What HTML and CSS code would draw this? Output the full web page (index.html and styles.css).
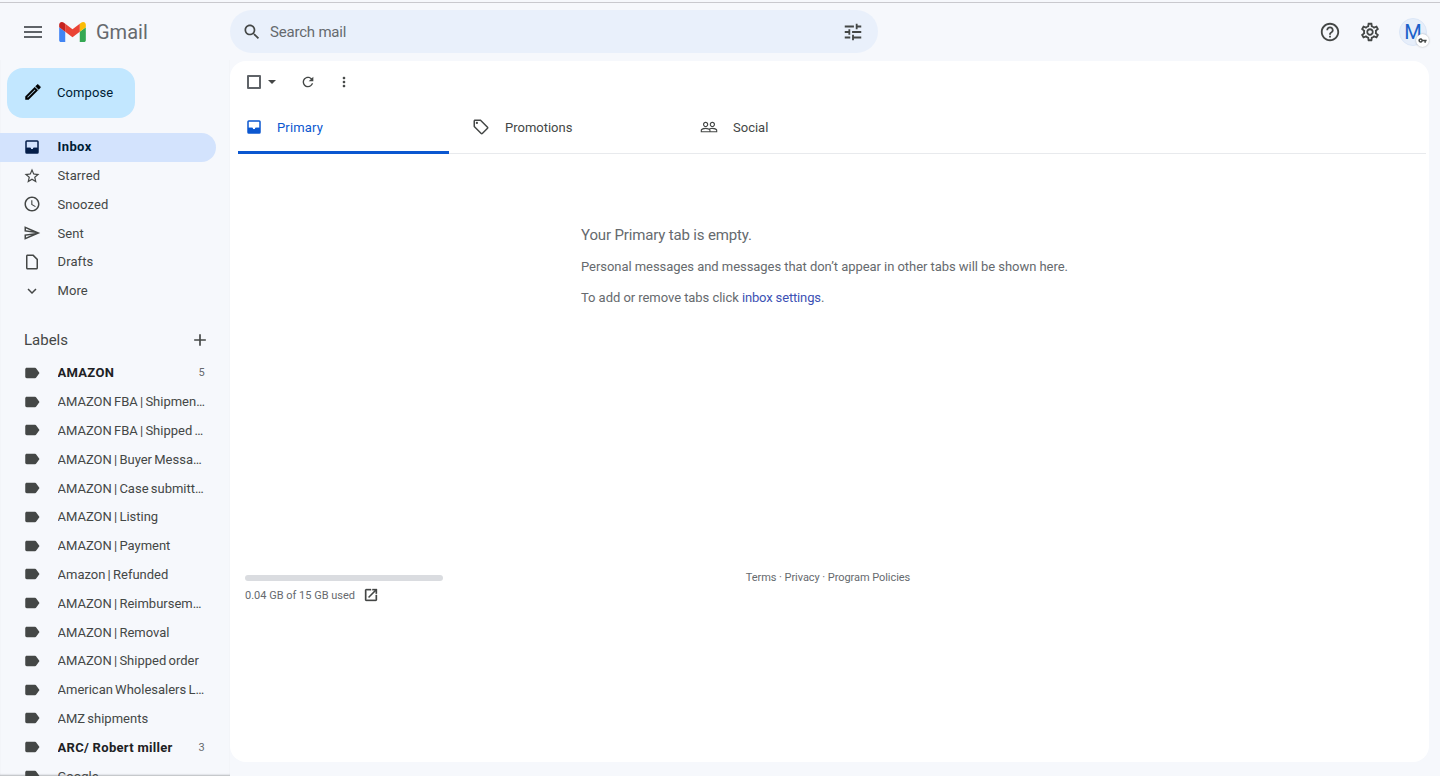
FILE: index.html
```html
<!DOCTYPE html>
<html lang="en">
<head>
    <meta charset="UTF-8">
    <meta name="viewport" content="width=device-width, initial-scale=1.0">
    <title>Inbox - Gmail</title>
    <link rel="stylesheet" href="styles.css">
</head>
<body>
    <svg class="icon-defs" aria-hidden="true">
        <symbol id="i-menu" viewBox="0 0 24 24"><path d="M3 18h18v-2H3v2zm0-5h18v-2H3v2zm0-7v2h18V6H3z"/></symbol>
        <symbol id="i-search" viewBox="0 0 24 24"><path d="M15.5 14h-.79l-.28-.27C15.41 12.59 16 11.11 16 9.5 16 5.91 13.09 3 9.5 3S3 5.91 3 9.5 5.91 16 9.5 16c1.61 0 3.09-.59 4.23-1.57l.27.28v.79l5 4.99L20.49 19l-4.99-5zm-6 0C7.01 14 5 11.99 5 9.5S7.01 5 9.5 5 14 7.01 14 9.5 11.99 14 9.5 14z"/></symbol>
        <symbol id="i-tune" viewBox="0 0 24 24"><path d="M3 17v2h6v-2H3zM3 5v2h10V5H3zm10 16v-2h8v-2h-8v-2h-2v6h2zM7 9v2H3v2h4v2h2V9H7zm14 4v-2H11v2h10zm-6-4h2V7h4V5h-4V3h-2v6z"/></symbol>
        <symbol id="i-help" viewBox="0 0 24 24"><path d="M11 18h2v-2h-2v2zm1-16C6.48 2 2 6.48 2 12s4.48 10 10 10 10-4.48 10-10S17.52 2 12 2zm0 18c-4.41 0-8-3.59-8-8s3.59-8 8-8 8 3.59 8 8-3.59 8-8 8zm0-14c-2.21 0-4 1.79-4 4h2c0-1.1.9-2 2-2s2 .9 2 2c0 2-3 1.75-3 5h2c0-2.25 3-2.5 3-5 0-2.21-1.79-4-4-4z"/></symbol>
        <symbol id="i-settings" viewBox="0 0 24 24"><path d="M19.43 12.98c.04-.32.07-.64.07-.98 0-.34-.03-.66-.07-.98l2.11-1.65c.19-.15.24-.42.12-.64l-2-3.46c-.09-.16-.26-.25-.44-.25-.06 0-.12.01-.17.03l-2.49 1c-.52-.4-1.08-.73-1.69-.98l-.38-2.65C14.46 2.18 14.25 2 14 2h-4c-.25 0-.46.18-.49.42l-.38 2.65c-.61.25-1.17.59-1.69.98l-2.49-1c-.06-.02-.12-.03-.18-.03-.17 0-.34.09-.43.25l-2 3.46c-.13.22-.07.49.12.64l2.11 1.65c-.04.32-.07.65-.07.98 0 .33.03.66.07.98l-2.11 1.65c-.19.15-.24.42-.12.64l2 3.46c.09.16.26.25.44.25.06 0 .12-.01.17-.03l2.49-1c.52.4 1.08.73 1.69.98l.38 2.65c.03.24.24.42.49.42h4c.25 0 .46-.18.49-.42l.38-2.65c.61-.25 1.17-.59 1.69-.98l2.49 1c.06.02.12.03.18.03.17 0 .34-.09.43-.25l2-3.46c.12-.22.07-.49-.12-.64l-2.11-1.65zm-1.98-1.71c.04.31.05.52.05.73 0 .21-.02.43-.05.73l-.14 1.13.89.7 1.08.84-.7 1.21-1.27-.51-1.04-.42-.9.68c-.43.32-.84.56-1.25.73l-1.06.43-.16 1.13-.2 1.35h-1.4l-.19-1.35-.16-1.13-1.06-.43c-.43-.18-.83-.41-1.23-.71l-.91-.7-1.06.43-1.27.51-.7-1.21 1.08-.84.89-.7-.14-1.13c-.03-.31-.05-.54-.05-.74s.02-.43.05-.73l.14-1.13-.89-.7-1.08-.84.7-1.21 1.27.51 1.04.42.9-.68c.43-.32.84-.56 1.25-.73l1.06-.43.16-1.13.2-1.35h1.39l.19 1.35.16 1.13 1.06.43c.43.18.83.41 1.23.71l.91.7 1.06-.43 1.27-.51.7 1.21-1.07.85-.89.7.14 1.13zM12 8c-2.21 0-4 1.79-4 4s1.79 4 4 4 4-1.79 4-4-1.79-4-4-4zm0 6c-1.1 0-2-.9-2-2s.9-2 2-2 2 .9 2 2-.9 2-2 2z"/></symbol>
        <symbol id="i-edit" viewBox="0 0 24 24"><path d="M3 17.25V21h3.75L17.81 9.94l-3.75-3.75L3 17.25zM5.92 19H5v-.92l9.06-9.06.92.92L5.92 19zM20.71 7.04c.39-.39.39-1.02 0-1.41l-2.34-2.34c-.2-.2-.45-.29-.71-.29s-.51.1-.7.29l-1.83 1.83 3.75 3.75 1.83-1.83z"/></symbol>
        <symbol id="i-star" viewBox="0 0 24 24"><path d="M22 9.24l-7.19-.62L12 2 9.19 8.63 2 9.24l5.46 4.73L5.82 21 12 17.27 18.18 21l-1.63-7.03L22 9.24zM12 15.4l-3.76 2.27 1-4.28-3.32-2.88 4.38-.38L12 6.1l1.71 4.04 4.38.38-3.32 2.88 1 4.28L12 15.4z"/></symbol>
        <symbol id="i-clock" viewBox="0 0 24 24"><path d="M11.99 2C6.47 2 2 6.48 2 12s4.47 10 9.99 10C17.52 22 22 17.52 22 12S17.52 2 11.99 2zM12 20c-4.42 0-8-3.58-8-8s3.58-8 8-8 8 3.58 8 8-3.58 8-8 8zm.5-13H11v6l5.25 3.15.75-1.23-4.5-2.67z"/></symbol>
        <symbol id="i-send" viewBox="0 0 24 24"><path d="M4.01 6.03l7.51 3.22-7.52-1 .01-2.22m7.5 8.72L4 17.97v-2.22l7.51-1M2.01 3L2 10l15 2-15 2 .01 7L23 12 2.01 3z"/></symbol>
        <symbol id="i-draft" viewBox="0 0 24 24"><path d="M14 2H6c-1.1 0-1.99.9-1.99 2L4 20c0 1.1.89 2 1.99 2H18c1.1 0 2-.9 2-2V8l-6-6zM6 20V4h7l5 5v11H6z"/></symbol>
        <symbol id="i-expand" viewBox="0 0 24 24"><path d="M16.59 8.59L12 13.17 7.41 8.59 6 10l6 6 6-6z"/></symbol>
        <symbol id="i-label" viewBox="0 0 24 24"><path d="M17.63 5.84C17.27 5.33 16.67 5 16 5L5 5.01C3.9 5.01 3 5.9 3 7v10c0 1.1.9 1.99 2 1.99L16 19c.67 0 1.27-.33 1.63-.84L22 12l-4.37-6.16z"/></symbol>
        <symbol id="i-add" viewBox="0 0 24 24"><path d="M19 13h-6v6h-2v-6H5v-2h6V5h2v6h6v2z"/></symbol>
        <symbol id="i-refresh" viewBox="0 0 24 24"><path d="M17.65 6.35C16.2 4.9 14.21 4 12 4c-4.42 0-7.99 3.58-7.99 8s3.57 8 7.99 8c3.73 0 6.84-2.55 7.73-6h-2.08c-.82 2.33-3.04 4-5.65 4-3.31 0-6-2.69-6-6s2.69-6 6-6c1.66 0 3.14.69 4.22 1.78L13 11h7V4l-2.35 2.35z"/></symbol>
        <symbol id="i-more" viewBox="0 0 24 24"><path d="M12 8c1.1 0 2-.9 2-2s-.9-2-2-2-2 .9-2 2 .9 2 2 2zm0 2c-1.1 0-2 .9-2 2s.9 2 2 2 2-.9 2-2-.9-2-2-2zm0 6c-1.1 0-2 .9-2 2s.9 2 2 2 2-.9 2-2-.9-2-2-2z"/></symbol>
        <symbol id="i-tag" viewBox="0 0 24 24"><path d="M21.41 11.58l-9-9C12.05 2.22 11.55 2 11 2H4c-1.1 0-2 .9-2 2v7c0 .55.22 1.05.59 1.42l9 9c.36.36.86.58 1.41.58s1.05-.22 1.41-.59l7-7c.37-.36.59-.86.59-1.41s-.23-1.06-.59-1.42zM13 20.01L4 11V4h7v-.01l9 9-7 7.02z"/><circle cx="6.5" cy="6.5" r="1.5"/></symbol>
        <symbol id="i-people" viewBox="0 0 24 24"><path d="M16.5 13c-1.2 0-3.07.34-4.5 1-1.43-.67-3.3-1-4.5-1C5.33 13 1 14.08 1 16.25V19h22v-2.75c0-2.17-4.33-3.25-6.5-3.25zm-4 4.5h-10v-1.25c0-.54 2.56-1.75 5-1.75s5 1.21 5 1.75v1.25zm9 0H14v-1.25c0-.46-.2-.86-.52-1.22.88-.3 1.96-.53 3.02-.53 2.44 0 5 1.21 5 1.75v1.25zM7.5 12c1.93 0 3.5-1.57 3.5-3.5S9.43 5 7.5 5 4 6.57 4 8.5 5.57 12 7.5 12zm0-5.5c1.1 0 2 .9 2 2s-.9 2-2 2-2-.9-2-2 .9-2 2-2zm9 5.5c1.93 0 3.5-1.57 3.5-3.5S18.43 5 16.5 5 13 6.57 13 8.5s1.57 3.5 3.5 3.5zm0-5.5c1.1 0 2 .9 2 2s-.9 2-2 2-2-.9-2-2 .9-2 2-2z"/></symbol>
        <symbol id="i-open" viewBox="0 0 24 24"><path d="M19 19H5V5h7V3H5c-1.11 0-2 .9-2 2v14c0 1.1.89 2 2 2h14c1.1 0 2-.9 2-2v-7h-2v7zM14 3v2h3.59l-9.83 9.83 1.41 1.41L19 6.41V10h2V3h-7z"/></symbol>
        <symbol id="i-key" viewBox="0 0 24 24"><path d="M12.65 10C11.83 7.67 9.61 6 7 6c-3.31 0-6 2.69-6 6s2.69 6 6 6c2.61 0 4.83-1.67 5.65-4H17v4h4v-4h2v-4H12.65zM7 14c-1.1 0-2-.9-2-2s.9-2 2-2 2 .9 2 2-.9 2-2 2z"/></symbol>
    </svg>

    <div class="topline"></div>

    <header class="header">
        <div class="brand">
            <svg class="icon menu-icon"><use href="#i-menu"/></svg>
            <svg class="gmail-logo" viewBox="52 42 88 66">
                <path fill="#4285f4" d="M58 108h14V74L52 59v43c0 3.32 2.69 6 6 6"/>
                <path fill="#34a853" d="M120 108h14c3.32 0 6-2.69 6-6V59l-20 15"/>
                <path fill="#fbbc04" d="M120 48v26l20-15v-8c0-7.42-8.47-11.65-14.4-7.2"/>
                <path fill="#ea4335" d="M72 74V48l24 18 24-18v26L96 92"/>
                <path fill="#c5221f" d="M52 51v8l20 15V48l-5.6-4.2c-5.94-4.45-14.4-.22-14.4 7.2"/>
            </svg>
            <span class="gmail-name">Gmail</span>
        </div>
        <div class="search">
            <svg class="icon search-icon"><use href="#i-search"/></svg>
            <span class="search-text">Search mail</span>
            <svg class="icon tune-icon"><use href="#i-tune"/></svg>
        </div>
        <div class="header-right">
            <svg class="icon header-icon"><use href="#i-help"/></svg>
            <svg class="icon header-icon"><use href="#i-settings"/></svg>
            <div class="avatar">
                M
                <span class="avatar-badge"><svg class="key-icon"><use href="#i-key"/></svg></span>
            </div>
        </div>
    </header>

    <div class="layout">
        <aside class="sidebar">
            <div class="compose">
                <svg class="icon compose-icon"><use href="#i-edit"/></svg>
                <span>Compose</span>
            </div>

            <nav class="nav">
                <div class="nav-item active">
                    <svg class="icon" viewBox="0 0 24 24">
                        <path d="M19 3H5a2 2 0 0 0-2 2v14a2 2 0 0 0 2 2h14a2 2 0 0 0 2-2V5a2 2 0 0 0-2-2zm0 10h-5c0 1.1-.9 2-2 2s-2-.9-2-2H5V5h14v8z"/>
                        <path d="M5 13h5c0 1.1.9 2 2 2s2-.9 2-2h5v6H5z"/>
                    </svg>
                    <span class="nav-text">Inbox</span>
                </div>
                <div class="nav-item"><svg class="icon"><use href="#i-star"/></svg><span class="nav-text">Starred</span></div>
                <div class="nav-item"><svg class="icon"><use href="#i-clock"/></svg><span class="nav-text">Snoozed</span></div>
                <div class="nav-item"><svg class="icon"><use href="#i-send"/></svg><span class="nav-text">Sent</span></div>
                <div class="nav-item"><svg class="icon"><use href="#i-draft"/></svg><span class="nav-text">Drafts</span></div>
                <div class="nav-item"><svg class="icon"><use href="#i-expand"/></svg><span class="nav-text">More</span></div>
            </nav>

            <div class="labels-head">
                <span>Labels</span>
                <svg class="icon add-icon"><use href="#i-add"/></svg>
            </div>

            <div class="labels">
                <div class="nav-item unread"><svg class="icon"><use href="#i-label"/></svg><span class="nav-text">AMAZON</span><span class="count">5</span></div>
                <div class="nav-item"><svg class="icon"><use href="#i-label"/></svg><span class="nav-text">AMAZON FBA | Shipment updates</span></div>
                <div class="nav-item"><svg class="icon"><use href="#i-label"/></svg><span class="nav-text">AMAZON FBA | Shipped orders</span></div>
                <div class="nav-item"><svg class="icon"><use href="#i-label"/></svg><span class="nav-text">AMAZON | Buyer Messages</span></div>
                <div class="nav-item"><svg class="icon"><use href="#i-label"/></svg><span class="nav-text">AMAZON | Case submitted</span></div>
                <div class="nav-item"><svg class="icon"><use href="#i-label"/></svg><span class="nav-text">AMAZON | Listing</span></div>
                <div class="nav-item"><svg class="icon"><use href="#i-label"/></svg><span class="nav-text">AMAZON | Payment</span></div>
                <div class="nav-item"><svg class="icon"><use href="#i-label"/></svg><span class="nav-text">Amazon | Refunded</span></div>
                <div class="nav-item"><svg class="icon"><use href="#i-label"/></svg><span class="nav-text">AMAZON | Reimbursement</span></div>
                <div class="nav-item"><svg class="icon"><use href="#i-label"/></svg><span class="nav-text">AMAZON | Removal</span></div>
                <div class="nav-item"><svg class="icon"><use href="#i-label"/></svg><span class="nav-text">AMAZON | Shipped order</span></div>
                <div class="nav-item"><svg class="icon"><use href="#i-label"/></svg><span class="nav-text">American Wholesalers List</span></div>
                <div class="nav-item"><svg class="icon"><use href="#i-label"/></svg><span class="nav-text">AMZ shipments</span></div>
                <div class="nav-item unread"><svg class="icon"><use href="#i-label"/></svg><span class="nav-text">ARC/ Robert miller</span><span class="count">3</span></div>
                <div class="nav-item"><svg class="icon"><use href="#i-label"/></svg><span class="nav-text">Google</span></div>
            </div>
        </aside>

        <main class="card">
            <div class="toolbar">
                <span class="checkbox"></span>
                <span class="caret"></span>
                <svg class="icon tool-icon refresh-icon"><use href="#i-refresh"/></svg>
                <svg class="icon tool-icon more-icon"><use href="#i-more"/></svg>
            </div>

            <div class="tabs">
                <div class="tab tab-primary">
                    <svg class="icon primary-icon" viewBox="0 0 24 24">
                        <path d="M19 3H5a2 2 0 0 0-2 2v14a2 2 0 0 0 2 2h14a2 2 0 0 0 2-2V5a2 2 0 0 0-2-2zm0 10h-5c0 1.1-.9 2-2 2s-2-.9-2-2H5V5h14v8z"/>
                        <path d="M5 13h5c0 1.1.9 2 2 2s2-.9 2-2h5v6H5z"/>
                    </svg>
                    <span>Primary</span>
                </div>
                <div class="tab tab-promotions"><svg class="icon"><use href="#i-tag"/></svg><span>Promotions</span></div>
                <div class="tab tab-social"><svg class="icon"><use href="#i-people"/></svg><span>Social</span></div>
            </div>

            <div class="empty">
                <div class="empty-title">Your Primary tab is empty.</div>
                <p>Personal messages and messages that don’t appear in other tabs will be shown here.</p>
                <p>To add or remove tabs click <a href="#">inbox settings</a>.</p>
            </div>

            <footer class="footer">
                <div class="storage">
                    <div class="storage-bar"></div>
                    <div class="storage-text">
                        <span>0.04 GB of 15 GB used</span>
                        <svg class="icon open-icon"><use href="#i-open"/></svg>
                    </div>
                </div>
                <div class="footer-links">Terms · Privacy · Program Policies</div>
            </footer>
        </main>
    </div>
</body>
</html>
```

FILE: styles.css
```css
:root {
    --bg-color: #f6f8fc;
    --text-color: #444746;
    --icon-color: #444746;
    --grey-text: #666a6e;
    --blue: #0b57d0;
}

* {
    box-sizing: border-box;
}

body {
    margin: 0;
    height: 776px;
    overflow: hidden;
    background-color: var(--bg-color);
    color: var(--text-color);
    font-family: Roboto, "Liberation Sans", sans-serif;
    font-size: 13px;
}

.icon-defs {
    display: none;
}

.icon {
    width: 20px;
    height: 20px;
    flex: none;
    fill: var(--icon-color);
}

.topline {
    height: 1px;
    margin-top: 2px;
    background-color: #c9c9ce;
}

/* header */

.header {
    display: flex;
    align-items: center;
    height: 57px;
}

.brand {
    display: flex;
    align-items: center;
    width: 230px;
    padding-left: 21px;
}

.menu-icon {
    width: 24px;
    height: 24px;
    fill: #5f6368;
}

.gmail-logo {
    width: 27px;
    height: 20px;
    margin-left: 14px;
}

.gmail-name {
    margin-left: 10px;
    font-size: 20px;
    color: var(--grey-text);
}

.search {
    display: flex;
    align-items: center;
    width: 648px;
    height: 43px;
    padding: 0 14px 0 12px;
    border-radius: 22px;
    background-color: #e9f0fb;
}

.search-text {
    flex: 1;
    margin-left: 8px;
    font-size: 15px;
    letter-spacing: -0.2px;
    color: var(--grey-text);
}

.search-icon {
    width: 20px;
    height: 20px;
}

.tune-icon {
    width: 22px;
    height: 22px;
}

.header-right {
    display: flex;
    align-items: center;
    margin-left: auto;
    margin-right: 13px;
    gap: 18px;
}

.header-icon {
    width: 22px;
    height: 22px;
}

.avatar {
    position: relative;
    display: flex;
    align-items: center;
    justify-content: center;
    width: 28px;
    height: 28px;
    border: 1px solid #dce7f7;
    border-radius: 50%;
    background-color: #e6eefa;
    color: #1a5fc9;
    font-size: 20px;
}

.avatar-badge {
    position: absolute;
    right: -3px;
    bottom: -2px;
    display: flex;
    align-items: center;
    justify-content: center;
    width: 13px;
    height: 13px;
    border-radius: 50%;
    background-color: #fff;
    box-shadow: 0 0 2px rgba(0, 0, 0, 0.3);
}

.key-icon {
    width: 9px;
    height: 9px;
    fill: #444746;
}

/* sidebar */

.layout {
    display: flex;
    height: 716px;
}

.sidebar {
    width: 230px;
    flex: none;
    overflow: hidden;
    box-shadow: inset 0 -2px 2px -1px rgba(60, 64, 67, 0.35);
}

.compose {
    display: flex;
    align-items: center;
    width: 128px;
    height: 50px;
    margin: 8px 0 0 7px;
    padding: 0 0 2px 16px;
    border-radius: 16px;
    background-color: #c2e7ff;
    color: #001d35;
    font-size: 13px;
    letter-spacing: 0.1px;
}

.compose-icon {
    width: 20px;
    height: 20px;
    margin-right: 14px;
    fill: #000;
    stroke: #000;
    stroke-width: 0.6px;
}

.nav {
    margin-top: 15.4px;
}

.nav-item {
    display: flex;
    align-items: center;
    width: 216px;
    height: 28.8px;
    padding: 0 11px 2px 23px;
    border-radius: 0 15px 15px 0;
    letter-spacing: 0.1px;
}

.nav-item .icon {
    width: 18px;
    height: 18px;
    margin-right: 16.5px;
}

.nav-text {
    flex: 1;
    min-width: 0;
    overflow: hidden;
    white-space: nowrap;
    text-overflow: ellipsis;
}

.nav-item.active {
    background-color: #d3e3fd;
    color: #001d35;
    font-weight: 700;
    letter-spacing: 0.4px;
}

.nav-item.active .icon {
    fill: #041e49;
}

.unread {
    font-weight: 700;
    color: #202124;
}

.labels .nav-item {
    letter-spacing: 0;
    word-spacing: -1px;
}

.labels .unread {
    letter-spacing: 0.3px;
    word-spacing: 0;
}

.count {
    flex: none;
    margin-left: 8px;
    font-size: 11px;
    font-weight: 400;
    color: var(--grey-text);
}

.labels-head {
    display: flex;
    align-items: center;
    justify-content: space-between;
    width: 216px;
    height: 30px;
    margin-top: 18.6px;
    padding: 0 6px 0 24px;
    font-size: 15px;
}

.add-icon {
    width: 20px;
    height: 20px;
}

.labels {
    margin-top: 4.7px;
}

/* main card */

.card {
    display: flex;
    flex-direction: column;
    width: 1199px;
    height: 701px;
    margin-top: 1px;
    border-radius: 16px;
    background-color: #fff;
}

.toolbar {
    display: flex;
    align-items: center;
    height: 42px;
    padding-left: 17px;
}

.checkbox {
    width: 14px;
    height: 14px;
    border: 2px solid #5f6368;
    border-radius: 1px;
}

.caret {
    width: 0;
    height: 0;
    margin-left: 7px;
    border-left: 4px solid transparent;
    border-right: 4px solid transparent;
    border-top: 4px solid #444746;
}

.tool-icon {
    width: 16px;
    height: 16px;
}

.refresh-icon {
    margin-left: 24px;
}

.more-icon {
    margin-left: 20px;
}

.tabs {
    display: flex;
    width: 1188px;
    height: 51px;
    margin-left: 8px;
    border-bottom: 1px solid #e8eaed;
    font-size: 13px;
}

.tab {
    display: flex;
    align-items: center;
    height: 48px;
    padding-left: 8px;
}

.tab .icon {
    width: 18px;
    height: 18px;
    margin-right: 14px;
}

.tab-primary {
    width: 211px;
    margin-right: 15px;
    height: 51px;
    padding-left: 7px;
    color: var(--blue);
    letter-spacing: 0.15px;
    border-bottom: 3px solid var(--blue);
    border-radius: 3px 3px 0 0;
}

.tab .primary-icon {
    fill: var(--blue);
}

.tab-promotions {
    width: 228px;
}

.tab-promotions .icon {
    margin-right: 15px;
}

.tab-social .icon {
    margin-right: 15px;
}

.empty {
    margin: 70px 0 0 351px;
    color: var(--grey-text);
}

.empty-title {
    font-size: 15px;
    line-height: 22px;
    letter-spacing: -0.15px;
}

.empty p {
    margin: 10px 0 0;
    line-height: 21px;
    letter-spacing: -0.05px;
}

.empty a {
    color: #3c51b4;
    letter-spacing: -0.15px;
    text-decoration: none;
}

.footer {
    display: grid;
    grid-template-columns: 1fr auto 1fr;
    margin-top: 267px;
    padding: 0 3px 0 0;
    font-size: 11px;
    color: var(--grey-text);
}

.storage {
    padding-left: 15px;
}

.storage-bar {
    width: 198px;
    height: 6px;
    border-radius: 3px;
    background-color: #dadce0;
}

.storage-text {
    display: flex;
    align-items: center;
    margin-top: 6px;
}

.open-icon {
    width: 16px;
    height: 16px;
    margin-left: 8px;
    stroke: var(--icon-color);
    stroke-width: 0.5px;
}

.footer-links {
    margin-top: -4px;
    letter-spacing: -0.06px;
}
```
